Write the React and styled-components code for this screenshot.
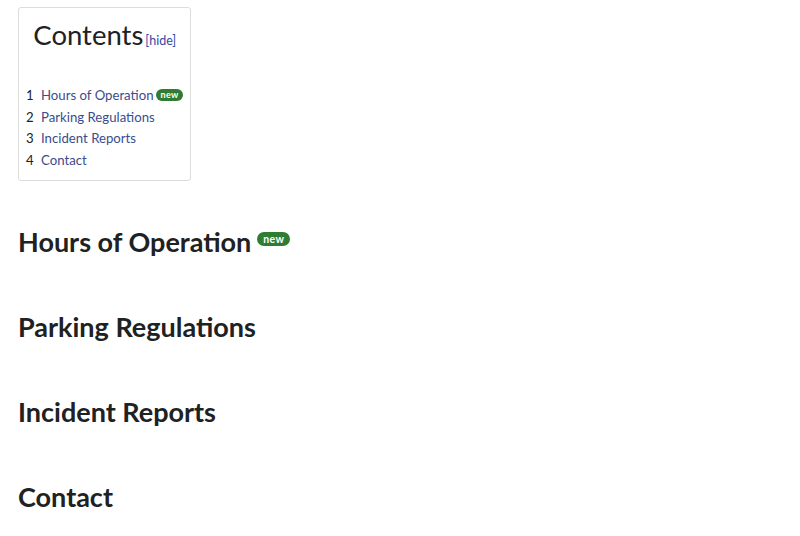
import React from 'react'
import styled, { createGlobalStyle } from 'styled-components'

const GlobalStyle = createGlobalStyle`
  body {
    margin: 0;
    background: #fff;
    font-family: 'Lato', 'Liberation Sans', sans-serif;
    color: #202122;
  }
`

const Page = styled.div`
  padding: 7px 18px;
`

const Toc = styled.div`
  display: inline-block;
  border: 1px solid #dcdcdc;
  border-radius: 3px;
  padding: 8px 7px 9px 7px;
  white-space: nowrap;
`

const TocTitle = styled.div`
  display: flex;
  align-items: baseline;
  justify-content: center;
  gap: 2px;
  margin-bottom: 31px;
`

const TitleText = styled.h2`
  margin: 0;
  font-size: 27.5px;
  font-weight: 400;
  line-height: 38px;
`

const Toggle = styled.a`
  font-size: 12.5px;
  color: #3448a8;
  cursor: pointer;
`

const TocList = styled.ol`
  list-style: none;
  margin: 0;
  padding: 0;
`

const TocItem = styled.li`
  display: flex;
  align-items: center;
  font-size: 13.2px;
  line-height: 21.5px;
`

const Num = styled.span`
  color: #202122;
  width: 15px;
  flex-shrink: 0;
`

const TocLink = styled.a`
  color: #3b4c8c;
  text-decoration: none;
`

const Badge = styled.span`
  display: inline-block;
  background: #2e7d32;
  color: #fff;
  font-weight: 700;
  border-radius: 999px;
  letter-spacing: 0.3px;
  font-size: ${p => (p.$big ? '10.5px' : '9px')};
  line-height: ${p => (p.$big ? '14px' : '12px')};
  padding: ${p => (p.$big ? '0 6px' : '0 5px')};
  margin-left: ${p => (p.$big ? '6px' : '2px')};
  position: relative;
  top: ${p => (p.$big ? '-3px' : '-1px')};
`

const Heading = styled.h2`
  display: flex;
  align-items: center;
  margin: 0;
  font-size: 27px;
  font-weight: 700;
  line-height: 32px;
  margin-top: ${p => (p.$first ? '45px' : '53px')};
`

const sections = [
  { title: 'Hours of Operation', isNew: true },
  { title: 'Parking Regulations' },
  { title: 'Incident Reports' },
  { title: 'Contact' },
]

export default function App() {
  return (
    <Page>
      <GlobalStyle />
      <Toc>
        <TocTitle>
          <TitleText>Contents</TitleText>
          <Toggle>[hide]</Toggle>
        </TocTitle>
        <TocList>
          {sections.map((s, i) => (
            <TocItem key={s.title}>
              <Num>{i + 1}</Num>
              <TocLink href="#">{s.title}</TocLink>
              {s.isNew && <Badge>new</Badge>}
            </TocItem>
          ))}
        </TocList>
      </Toc>
      {sections.map((s, i) => (
        <Heading key={s.title} $first={i === 0}>
          {s.title}
          {s.isNew && <Badge $big>new</Badge>}
        </Heading>
      ))}
    </Page>
  )
}
